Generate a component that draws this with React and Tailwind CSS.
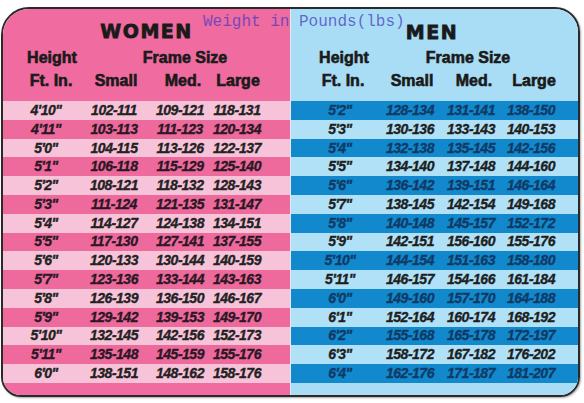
const women = [
  ["4'10\"", '102-111', '109-121', '118-131'],
  ["4'11\"", '103-113', '111-123', '120-134'],
  ["5'0\"", '104-115', '113-126', '122-137'],
  ["5'1\"", '106-118', '115-129', '125-140'],
  ["5'2\"", '108-121', '118-132', '128-143'],
  ["5'3\"", '111-124', '121-135', '131-147'],
  ["5'4\"", '114-127', '124-138', '134-151'],
  ["5'5\"", '117-130', '127-141', '137-155'],
  ["5'6\"", '120-133', '130-144', '140-159'],
  ["5'7\"", '123-136', '133-144', '143-163'],
  ["5'8\"", '126-139', '136-150', '146-167'],
  ["5'9\"", '129-142', '139-153', '149-170'],
  ["5'10\"", '132-145', '142-156', '152-173'],
  ["5'11\"", '135-148', '145-159', '155-176'],
  ["6'0\"", '138-151', '148-162', '158-176'],
]

const men = [
  ["5'2\"", '128-134', '131-141', '138-150'],
  ["5'3\"", '130-136', '133-143', '140-153'],
  ["5'4\"", '132-138', '135-145', '142-156'],
  ["5'5\"", '134-140', '137-148', '144-160'],
  ["5'6\"", '136-142', '139-151', '146-164'],
  ["5'7\"", '138-145', '142-154', '149-168'],
  ["5'8\"", '140-148', '145-157', '152-172'],
  ["5'9\"", '142-151', '156-160', '155-176'],
  ["5'10\"", '144-154', '151-163', '158-180'],
  ["5'11\"", '146-157', '154-166', '161-184'],
  ["6'0\"", '149-160', '157-170', '164-188'],
  ["6'1\"", '152-164', '160-174', '168-192'],
  ["6'2\"", '155-168', '165-178', '172-197'],
  ["6'3\"", '158-172', '167-182', '176-202'],
  ["6'4\"", '162-176', '171-187', '181-207'],
]

// left offsets of the four data cells, per side
const womenCells = ['ml-[15px]', 'ml-[12px]', 'ml-[10px]', 'ml-[1px]']
const menCells = ['ml-[21px]', 'ml-[14px]', 'ml-[5px]', 'ml-[4px]']

function Cell({ className, children }) {
  return (
    <div className={`w-[56px] flex justify-center whitespace-nowrap ${className}`}>
      {children}
    </div>
  )
}

function HeadCell({ className, children }) {
  return (
    <div className={`w-[54px] flex justify-center whitespace-nowrap ${className}`}>
      {children}
    </div>
  )
}

function Rows({ data, cells, even, odd, evenText, oddText }) {
  return (
    <div className="flex flex-col">
      {data.map((row, i) => (
        <div
          key={i}
          className={`h-[18.8px] flex items-center text-[14px] font-bold italic tracking-[-0.5px] [-webkit-text-stroke:0.35px] ${i % 2 === 0 ? even + ' ' + evenText : odd + ' ' + oddText}`}
        >
          {row.map((v, j) => (
            <Cell key={j} className={cells[j]}>{v}</Cell>
          ))}
        </div>
      ))}
    </div>
  )
}

export default function App() {
  return (
    <div className="w-[584px] h-[403px] bg-white pl-[1px] pt-[7px] font-['Liberation_Sans',Arial,sans-serif]">
      <div className="relative w-[579px] h-[390px] border-2 border-[#2a2a2a] rounded-tl-[28px] rounded-tr-[25px] rounded-b-[20px] overflow-hidden flex shadow-[1px_1px_2px_rgba(0,0,0,0.35)]">
        {/* women */}
        <div className="w-[287px] bg-[#ef6ba0] flex flex-col text-[#1a1a1a]">
          <div className="h-[92px] flex flex-col pt-[10px]">
            <div className="text-center leading-[24px] text-[19px] font-bold tracking-[1.5px] font-['DejaVu_Sans',sans-serif] [-webkit-text-stroke:0.8px]">
              WOMEN
            </div>
            <div className="mt-[3px] flex leading-[23px] text-[16px] font-bold [-webkit-text-stroke:0.6px]">
              <HeadCell className="ml-[22px]">Height</HeadCell>
              <div className="ml-[56px] w-[100px] flex justify-center">Frame Size</div>
            </div>
            <div className="flex leading-[23px] text-[16px] font-bold [-webkit-text-stroke:0.6px]">
              <HeadCell className="ml-[21px]">Ft. In.</HeadCell>
              <HeadCell className="ml-[11px]">Small</HeadCell>
              <HeadCell className="ml-[13px]">Med.</HeadCell>
              <HeadCell className="ml-[1px]">Large</HeadCell>
            </div>
          </div>
          <Rows
            data={women}
            cells={womenCells}
            even="bg-[#f7c3d9]"
            odd="bg-[#ee6a9d]"
            evenText="text-[#222]"
            oddText="text-[#2b1824]"
          />
        </div>

        <div className="w-px bg-[#dcecf6]" />

        {/* men */}
        <div className="flex-1 bg-[#a9ddf5] flex flex-col text-[#1a1a1a]">
          <div className="h-[92px] flex flex-col pt-[11px]">
            <div className="text-center pr-[5px] leading-[24px] text-[19px] font-bold tracking-[1.5px] font-['DejaVu_Sans',sans-serif] [-webkit-text-stroke:0.8px]">
              MEN
            </div>
            <div className="mt-[2px] flex leading-[23px] text-[16px] font-bold [-webkit-text-stroke:0.6px]">
              <HeadCell className="ml-[26px]">Height</HeadCell>
              <div className="ml-[47px] w-[100px] flex justify-center">Frame Size</div>
            </div>
            <div className="flex leading-[23px] text-[16px] font-bold [-webkit-text-stroke:0.6px]">
              <HeadCell className="ml-[25px]">Ft. In.</HeadCell>
              <HeadCell className="ml-[15px]">Small</HeadCell>
              <HeadCell className="ml-[8px]">Med.</HeadCell>
              <HeadCell className="ml-[6px]">Large</HeadCell>
            </div>
          </div>
          <Rows
            data={men}
            cells={menCells}
            even="bg-[#1289cc]"
            odd="bg-[#b1e1f6]"
            evenText="text-[#103a66]"
            oddText="text-[#1e1e1e]"
          />
        </div>

        <div className="absolute left-[200px] top-[5px] leading-none text-[16px] font-['Liberation_Mono',monospace] text-[#4a3cc0]/75 whitespace-pre">
          Weight in Pounds(lbs)
        </div>
      </div>
    </div>
  )
}
